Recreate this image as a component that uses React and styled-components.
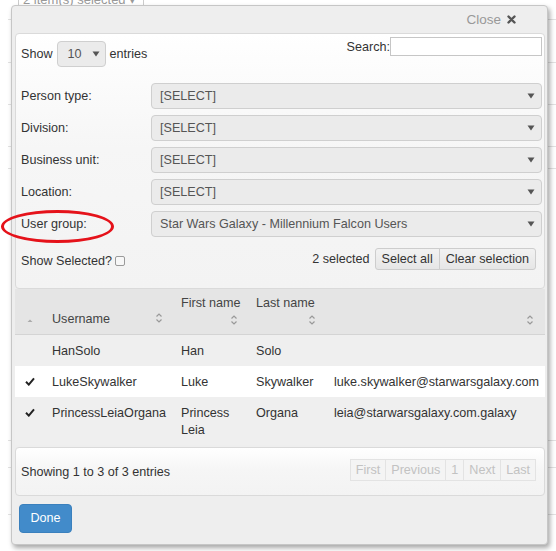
import styled, { createGlobalStyle } from "styled-components";

const GlobalStyle = createGlobalStyle`
  html, body { margin: 0; padding: 0; background: #fff; }
  body {
    font-family: "Liberation Sans", Arial, sans-serif;
    font-size: 12.6px;
    color: #333;
  }
  * { box-sizing: border-box; }
`;

const Page = styled.div`
  position: relative;
  width: 556px;
  height: 551px;
  overflow: hidden;
`;

const BgButton = styled.div`
  margin: -14px 0 0 18px;
  width: 126px;
  height: 22px;
  border: 1px solid #ccc;
  border-radius: 3px;
  color: #999;
  padding: 6px 0 0 4px;
  line-height: 14px;
  font-size: 13px;
`;

const BgRow = styled.div`
  margin-left: 8px;
  height: ${(p) => p.$h}px;
  border-bottom: 1px solid #e2e2e2;
`;

const Dialog = styled.div`
  position: absolute;
  left: 11px;
  top: 5px;
  width: 537px;
  height: 540px;
  background: #eeeeee;
  border: 1px solid #c6c6c6;
  border-radius: 4px;
  box-shadow: 2px 3px 5px rgba(0, 0, 0, 0.35);
  padding: 0 2px 0 3px;
`;

const TitleBar = styled.div`
  height: 27px;
  display: flex;
  align-items: center;
  justify-content: flex-end;
  gap: 6px;
  padding-right: 29px;
  color: #999;
  font-size: 13.5px;
`;

const Panel = styled.div`
  border: 1px solid #dadada;
  border-radius: 4px;
  background: linear-gradient(#ffffff 0%, #f6f6f6 45%, #f3f3f3 100%);
  padding: ${(p) => p.$pad};
  margin-top: ${(p) => p.$mt || "0"};
`;

const TopRow = styled.div`
  display: flex;
  justify-content: space-between;
  align-items: flex-start;
  margin-bottom: 16px;
`;

const ShowGroup = styled.div`
  display: flex;
  align-items: center;
  gap: 4px;
  margin-top: 4px;
`;

const SearchGroup = styled.div`
  display: flex;
  align-items: center;
`;

const SearchInput = styled.div`
  width: 152px;
  height: 19px;
  border: 1px solid #c6c6c6;
  background: #fff;
`;

const SelectBox = styled.div`
  display: flex;
  align-items: center;
  justify-content: space-between;
  height: 26px;
  width: ${(p) => p.$w || "auto"};
  padding: ${(p) => p.$pad || "0 6px 0 8px"};
  background: #ebebeb;
  border: 1px solid #cfcfcf;
  border-radius: 4px;
  color: #555;
`;

const FilterRow = styled.div`
  display: grid;
  grid-template-columns: 130px 1fr;
  align-items: center;
  margin-bottom: 6px;
`;

const BottomRow = styled.div`
  display: flex;
  justify-content: space-between;
  align-items: center;
  height: 22px;
  margin-top: 11px;
  padding-right: 6px;
`;

const CheckLabel = styled.div`
  display: flex;
  align-items: center;
  margin-top: 3px;
`;

const CheckBox = styled.span`
  display: inline-block;
  width: 10px;
  height: 10px;
  margin-left: 3px;
  border: 1px solid #9a9a9a;
  border-radius: 2px;
  background: #f7f7f7;
`;

const SelectionTools = styled.div`
  display: flex;
  align-items: center;
  gap: 5px;
`;

const ButtonGroup = styled.div`
  display: flex;
`;

const GrayButton = styled.div`
  height: 22px;
  line-height: 20px;
  padding: 0 6px;
  border: 1px solid #cdcdcd;
  background: linear-gradient(#f2f2f2, #e6e6e6);
  color: #333;
  margin-left: ${(p) => (p.$joined ? "-1px" : "0")};
  border-radius: ${(p) => (p.$joined ? "0 3px 3px 0" : "3px 0 0 3px")};
`;

const Table = styled.table`
  width: 530px;
  border-collapse: collapse;
  table-layout: fixed;
`;

const Th = styled.th`
  background: #e5e5e5;
  border-bottom: 1px solid #d4d4d4;
  font-weight: normal;
  text-align: left;
  vertical-align: bottom;
  color: #444;
  line-height: 18px;
  padding: 5px 7px 6px;
`;

const SortIcon = styled.span`
  float: right;
  display: block;
  width: 16px;
  height: 16px;
`;

const Tr = styled.tr`
  background: ${(p) => (p.$odd ? "#efefef" : "#ffffff")};
  & + & td {
    border-top: 1px solid #dcdcdc;
  }
`;

const Td = styled.td`
  padding: 8px 7px 6px;
  line-height: 17px;
  vertical-align: top;
  white-space: ${(p) => (p.$nowrap ? "nowrap" : "normal")};
  text-align: ${(p) => (p.$center ? "center" : "left")};
`;

const FooterRow = styled.div`
  display: flex;
  align-items: center;
  justify-content: space-between;
  height: 47px;
  padding: 0 8px 0 5px;
`;

const Pager = styled.div`
  display: flex;
  margin-top: -3px;
`;

const PageButton = styled.div`
  height: 22px;
  line-height: 20px;
  padding: 0 5px;
  border: 1px solid #e3e3e3;
  margin-left: -1px;
  background: #f4f4f4;
  color: #c2c2c2;
`;

const DoneButton = styled.div`
  margin: 8px 0 0 4px;
  width: 53px;
  height: 29px;
  line-height: 27px;
  text-align: center;
  color: #fff;
  background: #428bca;
  border: 1px solid #3a80bd;
  border-radius: 4px;
`;

const Annotation = styled.div`
  position: absolute;
  left: 1px;
  top: 210px;
  width: 113px;
  height: 33px;
  border: 3px solid #e5121a;
  border-radius: 50%;
`;

const Arrow = () => (
  <svg width="8" height="6" viewBox="0 0 8 6">
    <polygon points="0.5,0.5 7.5,0.5 4,5.5" fill="#555" />
  </svg>
);

const CloseX = () => (
  <svg width="9" height="9" viewBox="0 0 9 9">
    <path d="M1.5 1.5 L7.5 7.5 M7.5 1.5 L1.5 7.5" stroke="#555" strokeWidth="2.4" strokeLinecap="round" />
  </svg>
);

const Sort = ({ asc }) => (
  <SortIcon>
    <svg width="16" height="16" viewBox="0 0 16 16">
      {asc ? (
        <polygon points="5.5,10 8,7.5 10.5,10" fill="#aaa" />
      ) : (
        <path d="M5.5 6.5 L8 4 L10.5 6.5 M5.5 9.5 L8 12 L10.5 9.5" stroke="#999" strokeWidth="1.2" fill="none" />
      )}
    </svg>
  </SortIcon>
);

const Check = () => (
  <svg width="10" height="9" viewBox="0 0 10 9">
    <path d="M1 4.8 L3.8 7.6 L9 1.4" stroke="#222" strokeWidth="2" fill="none" />
  </svg>
);

const bgLines = [21, 65, 108, 151, 174, 447, 475, 523];

const filters = [
  ["Person type:", "[SELECT]"],
  ["Division:", "[SELECT]"],
  ["Business unit:", "[SELECT]"],
  ["Location:", "[SELECT]"],
  ["User group:", "Star Wars Galaxy - Millennium Falcon Users"],
];

const users = [
  { checked: false, user: "HanSolo", first: "Han", last: "Solo", email: "" },
  { checked: true, user: "LukeSkywalker", first: "Luke", last: "Skywalker", email: "luke.skywalker@starwarsgalaxy.com" },
  { checked: true, user: "PrincessLeiaOrgana", first: "Princess Leia", last: "Organa", email: "leia@starwarsgalaxy.com.galaxy" },
];

export default function App() {
  let prev = 8;
  const rows = bgLines.map((y) => {
    const h = y - prev - 1;
    prev = y;
    return h;
  });

  return (
    <Page>
      <GlobalStyle />
      <BgButton>2 item(s) selected ▾</BgButton>
      {rows.map((h, i) => (
        <BgRow key={i} $h={h} />
      ))}

      <Dialog>
        <TitleBar>
          Close <CloseX />
        </TitleBar>

        <Panel $pad="3px 2px 18px 5px">
          <TopRow>
            <ShowGroup>
              Show
              <SelectBox $w="49px" $pad="0 5px 0 10px">
                10 <Arrow />
              </SelectBox>
              entries
            </ShowGroup>
            <SearchGroup>
              Search:
              <SearchInput />
            </SearchGroup>
          </TopRow>

          {filters.map(([label, value]) => (
            <FilterRow key={label}>
              <span>{label}</span>
              <SelectBox>
                {value} <Arrow />
              </SelectBox>
            </FilterRow>
          ))}

          <BottomRow>
            <CheckLabel>
              Show Selected?
              <CheckBox />
            </CheckLabel>
            <SelectionTools>
              2 selected
              <ButtonGroup>
                <GrayButton>Select all</GrayButton>
                <GrayButton $joined>Clear selection</GrayButton>
              </ButtonGroup>
            </SelectionTools>
          </BottomRow>
        </Panel>

        <Table>
          <colgroup>
            <col style={{ width: 30 }} />
            <col style={{ width: 129 }} />
            <col style={{ width: 75 }} />
            <col style={{ width: 78 }} />
            <col style={{ width: 218 }} />
          </colgroup>
          <thead>
            <tr>
              <Th>
                <Sort asc />
              </Th>
              <Th>
                Username
                <Sort />
              </Th>
              <Th>
                First name
                <Sort />
              </Th>
              <Th>
                Last name
                <Sort />
              </Th>
              <Th>
                <Sort />
              </Th>
            </tr>
          </thead>
          <tbody>
            {users.map((u, i) => (
              <Tr key={u.user} $odd={i % 2 === 0}>
                <Td $center>{u.checked && <Check />}</Td>
                <Td $nowrap>{u.user}</Td>
                <Td>{u.first}</Td>
                <Td $nowrap>{u.last}</Td>
                <Td $nowrap>{u.email}</Td>
              </Tr>
            ))}
          </tbody>
        </Table>

        <Panel $pad="0" $mt="2px">
          <FooterRow>
            Showing 1 to 3 of 3 entries
            <Pager>
              <PageButton>First</PageButton>
              <PageButton>Previous</PageButton>
              <PageButton>1</PageButton>
              <PageButton>Next</PageButton>
              <PageButton>Last</PageButton>
            </Pager>
          </FooterRow>
        </Panel>

        <DoneButton>Done</DoneButton>
      </Dialog>

      <Annotation />
    </Page>
  );
}
